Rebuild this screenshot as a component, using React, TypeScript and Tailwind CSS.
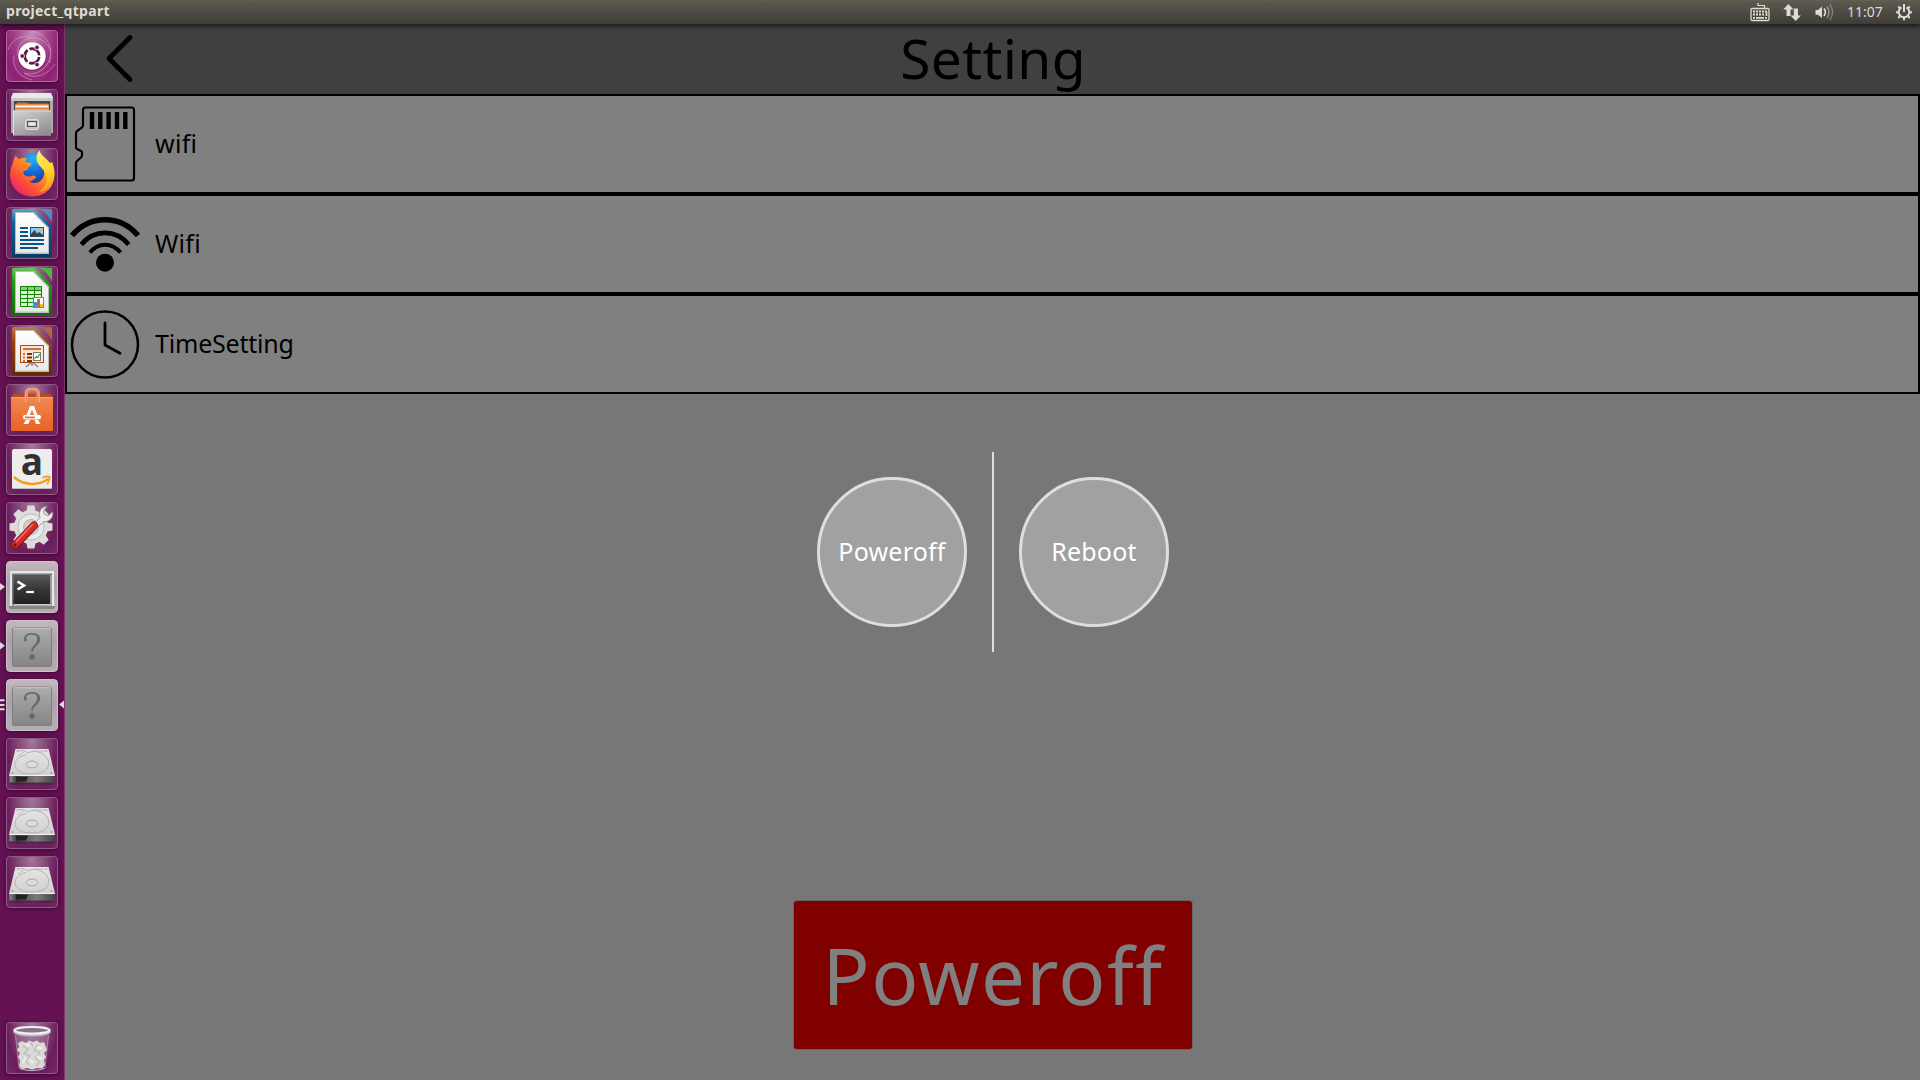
import React from "react";

const FONT = "font-['Noto_Sans',sans-serif]";

type TileProps = {
  children: React.ReactNode;
  kind?: "glass" | "dash" | "light";
  left?: "arrow" | "bars";
  right?: boolean;
};

function Tile({ children, kind = "glass", left, right }: TileProps) {
  const bg =
    kind === "dash"
      ? "border-[#b868a3] bg-[radial-gradient(ellipse_at_50%_0%,#c98fb9_0%,#a5458c_45%,#8d2072_80%,#9a2f80_100%)]"
      : kind === "light"
        ? "border-[#cdc3ca] bg-[linear-gradient(180deg,#c2b9bf_0%,#aca2aa_40%,#b6adb4_100%)]"
        : "border-[#8d5c85] bg-[radial-gradient(ellipse_at_50%_0%,#a27b9b_0%,#854a7a_38%,#6b1c5c_72%,#712a63_100%)]";
  return (
    <div className="relative flex h-[52px] w-full shrink-0 pl-1.5">
      <div className={"h-[52px] w-[52px] rounded-[4px] border shadow-[0_1px_4px_rgba(30,0,25,0.6)] " + bg}>
        <svg className="-m-px block h-[52px] w-[52px] overflow-visible" viewBox="0 0 52 52">
          {children}
        </svg>
      </div>
      {left === "arrow" && (
        <svg className="absolute left-0 top-5 h-3 w-[5px]" viewBox="0 0 5 12">
          <path d="M0 2L5 5.7L0 9.5Z" fill="#ded8dc" />
        </svg>
      )}
      {left === "bars" && (
        <svg className="absolute left-0 top-5 h-3 w-[5px]" viewBox="0 0 5 12">
          <path d="M0 0.3h4l1 1l-1 1H0zM0 5h4l1 1l-1 1H0zM0 9.3h4l1 1l-1 1H0z" fill="#ded8dc" />
        </svg>
      )}
      {right && (
        <svg className="absolute left-[59px] top-5 h-3 w-[5px]" viewBox="0 0 5 12">
          <path d="M5 1.5L0 5.5L5 9.5Z" fill="#ded8dc" />
        </svg>
      )}
    </div>
  );
}

function Gradients() {
  return (
    <svg className="absolute h-0 w-0" aria-hidden="true">
      <defs>
        <linearGradient id="metal" x1="0" y1="0" x2="0.6" y2="1">
          <stop offset="0" stopColor="#d4d4d4" />
          <stop offset="1" stopColor="#919191" />
        </linearGradient>
        <linearGradient id="paper" x1="0" y1="0" x2="0" y2="1">
          <stop offset="0" stopColor="#ffffff" />
          <stop offset="1" stopColor="#e9e9e9" />
        </linearGradient>
        <linearGradient id="blueDoc" x1="0" y1="0" x2="0" y2="1">
          <stop offset="0" stopColor="#5b9fc6" />
          <stop offset="0.3" stopColor="#0d6199" />
          <stop offset="1" stopColor="#063d66" />
        </linearGradient>
        <linearGradient id="greenDoc" x1="0" y1="0" x2="0" y2="1">
          <stop offset="0" stopColor="#6cc35a" />
          <stop offset="0.3" stopColor="#1f9a0c" />
          <stop offset="1" stopColor="#136b06" />
        </linearGradient>
        <linearGradient id="brownDoc" x1="0" y1="0" x2="0" y2="1">
          <stop offset="0" stopColor="#c07a4d" />
          <stop offset="0.3" stopColor="#97430f" />
          <stop offset="1" stopColor="#642a03" />
        </linearGradient>
        <linearGradient id="bag" x1="0" y1="0" x2="0" y2="1">
          <stop offset="0" stopColor="#ef8a50" />
          <stop offset="1" stopColor="#ea6127" />
        </linearGradient>
        <linearGradient id="fox" x1="0.9" y1="0" x2="0.1" y2="0.9">
          <stop offset="0" stopColor="#ffd52e" />
          <stop offset="0.4" stopColor="#ff9321" />
          <stop offset="0.75" stopColor="#fb4a3a" />
          <stop offset="1" stopColor="#e52374" />
        </linearGradient>
        <linearGradient id="foxTail" x1="0" y1="0" x2="0.2" y2="1">
          <stop offset="0" stopColor="#fff36b" />
          <stop offset="0.6" stopColor="#ffd22b" />
          <stop offset="1" stopColor="#ff9a1c" />
        </linearGradient>
        <radialGradient id="globe" cx="0.5" cy="0.15" r="0.9">
          <stop offset="0" stopColor="#25b6f8" />
          <stop offset="0.5" stopColor="#1268d8" />
          <stop offset="1" stopColor="#2b2482" />
        </radialGradient>
        <linearGradient id="screen" x1="0" y1="0" x2="0" y2="1">
          <stop offset="0" stopColor="#5a5a58" />
          <stop offset="0.5" stopColor="#363636" />
          <stop offset="1" stopColor="#222222" />
        </linearGradient>
        <linearGradient id="unknown" x1="0" y1="0" x2="0" y2="1">
          <stop offset="0" stopColor="#acacac" />
          <stop offset="1" stopColor="#858585" />
        </linearGradient>
        <linearGradient id="driveTop" x1="0" y1="0" x2="0" y2="1">
          <stop offset="0" stopColor="#e6e6e6" />
          <stop offset="1" stopColor="#cfcfcf" />
        </linearGradient>
        <linearGradient id="driveFront" x1="0" y1="0" x2="1" y2="0">
          <stop offset="0" stopColor="#8b8b8b" />
          <stop offset="0.15" stopColor="#3e3e3e" />
          <stop offset="0.6" stopColor="#7b7b7b" />
          <stop offset="1" stopColor="#454545" />
        </linearGradient>
      </defs>
    </svg>
  );
}

function DashIcon() {
  return (
    <>
      <g fill="none" stroke="#e0b3d4" strokeWidth="1" opacity="0.55">
        <path d="M12 26C10 12 22 5 34 9C44 13 47 25 43 33" />
        <path d="M26 1C42 5 48 18 43 31C39 41 28 46 18 43" />
        <path d="M2 20C6 9 16 4 27 8" />
        <path d="M8 26C6 38 14 47 26 50" />
        <path d="M18 43C28 50 42 45 49 34" />
      </g>
      <circle cx="26" cy="26.7" r="14.2" fill="#5b0b48" opacity="0.45" />
      <circle cx="26" cy="26" r="13.7" fill="#fff" />
      <circle cx="26" cy="26" r="7.3" fill="none" stroke="#5f174c" strokeWidth="2.7" strokeDasharray="13.3 2" strokeDashoffset="-1" />
      <g fill="#5f174c" stroke="#fff" strokeWidth="0.8">
        <circle cx="16.2" cy="26" r="2.3" />
        <circle cx="31" cy="17.4" r="2.3" />
        <circle cx="31" cy="34.6" r="2.3" />
      </g>
    </>
  );
}

function FilesIcon() {
  return (
    <>
      <path d="M7 4H45L47 9V44H5V9Z" fill="#aaa" />
      <path d="M7 4H45L47 9H5Z" fill="#e9e9e9" />
      <path d="M5 9h42v3H5z" fill="#c8c8c8" />
      <path d="M8 12h36v10H8z" fill="#4a4541" />
      <path d="M11 13.500h10l1 1h20v3H9z" fill="#d9663a" />
      <path d="M9 15.500h34v6h-34z" fill="#f5b06a" />
      <path d="M10 17.500h32" stroke="#fff" strokeWidth="1.2" />
      <path d="M9 19.500h34" stroke="#e9873f" strokeWidth="1.5" />
      <path d="M7 21.500h38V47H7z" fill="url(#metal)" />
      <path d="M7 22h38M7.500 22v25" stroke="#dedede" />
      <path d="M7 46.500h38" stroke="#808080" />
      <rect x="19.500" y="30.500" width="13" height="10" rx="2" fill="#c3c3c3" stroke="#e0e0e0" />
      <rect x="21.600" y="32.600" width="8.800" height="4.800" fill="#eee" stroke="#555" strokeWidth="1.2" />
    </>
  );
}

function FirefoxIcon() {
  return (
    <>
      <circle cx="27" cy="21.5" r="16" fill="url(#globe)" />
      <path
        d="M10 7C10.500 9 11.500 10.500 13 11.300C16 9.200 18.500 9.500 21 10C19.700 11.500 19.500 13 20 14.200L25.300 15C26 17 24 18.500 21.700 19.500L21.500 22.500C19 22 17.500 23 17.200 25C18 28 22 29 25 28.300C27.500 27 29.500 27.500 29.700 29.800C28 31.500 26 33 23.500 33.500C30 37.500 37.500 33 38.200 25.500C38.500 19.500 35 14.500 31.500 12L43 16C50 25 49 35 43 41.500C34 51 17 50.500 9 41C2 33 3.500 21 7 15C7.200 12 8.500 9 10 7Z"
        fill="url(#fox)"
      />
      <path
        d="M33.500 2.300C35 8 40 10 43.500 14.500C44.800 15 46 14.500 46 13.700C49.500 22 49.800 30 45.500 36.500C42.500 41 37 44 32.500 44C40 39 42.500 32 39 24.500C36.500 19 30 17 30.500 9.500C30.800 6.500 32 4 33.500 2.300Z"
        fill="url(#foxTail)"
      />
    </>
  );
}

function DocBase({ fill, ear }: { fill: string; ear: string }) {
  return (
    <>
      <path d="M8 2H29L46 20V48Q46 50 44 50H8Q6 50 6 48V4Q6 2 8 2Z" fill={fill} />
      <path d="M33 2H45Q46 2 46 3V15.500C43 9.500 39 4.500 33 2Z" fill={ear} />
      <path d="M9 5H28L43 20.500V47H9Z" fill="#bcbcbc" />
      <path d="M10 6H27L42 21.500V45.500H10Z" fill="url(#paper)" />
    </>
  );
}

function WriterIcon() {
  return (
    <>
      <DocBase fill="url(#blueDoc)" ear="#4a8fbd" />
      <path d="M14 21h8M14 25h8M14 29h8M14 33h24M14 37h24M14 41h18" stroke="#0b5487" strokeWidth="2" />
      <rect x="24.500" y="20.500" width="13" height="9" fill="#8cc7f0" stroke="#0b5487" />
      <path d="M25 29.500V27L28.500 23L31 26.500L33 25L37 28V29.500Z" fill="#3b4348" />
      <path d="M34 21h3v3z" fill="#f8c62d" />
    </>
  );
}

function CalcIcon() {
  return (
    <>
      <DocBase fill="url(#greenDoc)" ear="#4fb83c" />
      <path d="M14.500 20.500h21v20h-21z" fill="#d9f5d2" />
      <path d="M14.500 20.500h21v4h-21z" fill="#7fd26f" />
      <path d="M14.500 20.500h21v20h-21zM14.500 24.500h21M14.500 28.500h21M14.500 32.500h21M14.500 36.500h21M21.500 20.500v20M28.500 20.500v20" fill="none" stroke="#148407" />
      <rect x="27.500" y="31.500" width="10" height="10" fill="#fff" stroke="#808080" />
      <path d="M28 36h3v5h-3z" fill="#2d9be8" />
      <path d="M31 33h3v8h-3z" fill="#dd6321" />
      <path d="M34 38h3v3h-3z" fill="#f0bb26" />
    </>
  );
}

function ImpressIcon() {
  return (
    <>
      <DocBase fill="url(#brownDoc)" ear="#b1683a" />
      <path d="M24.500 38L20 42M27.500 38L32 42M26 38v3" stroke="#888" strokeWidth="1.6" />
      <rect x="14.500" y="20.500" width="23" height="17" fill="#fbe6da" stroke="#ad4a15" />
      <path d="M17 24h18" stroke="#db6a2d" strokeWidth="2" />
      <path d="M17 29h2M17 32.500h2M17 36h2" stroke="#db6a2d" strokeWidth="1.800" />
      <path d="M21 29h5M21 32.500h5M21 36h5" stroke="#7d3105" strokeWidth="1.800" />
      <rect x="27.500" y="27.500" width="7" height="8" fill="#fff" stroke="#777" />
      <path d="M28.500 33.500L30.500 31.500L31.500 32.500L34 29" fill="none" stroke="#2ea023" strokeWidth="1.200" />
    </>
  );
}

function SoftwareIcon() {
  return (
    <>
      <path d="M7 10L9 13M45 10L43 13M7 10H45L47 13.500H5Z" fill="#b64d22" />
      <path d="M5 13H47V47H5Z" fill="url(#bag)" />
      <path d="M5 13.500H47" stroke="#f5a478" />
      <path d="M20.500 18V9.500Q20.500 5.500 24 5.500H28.500Q32 5.500 32 9.500V18" fill="none" stroke="#ef8e62" strokeWidth="3" />
      <path d="M19.200 18V9Q19.200 4.500 24 4.500H28.500Q33.300 4.500 33.300 9V18" fill="none" stroke="#f7b795" strokeWidth="0.700" />
      <path d="M24 22H28L31.500 31H28L26 25.500L24 31H20.500ZM20 36H24L22.300 40H17.500ZM28.500 36H32L34.500 40H30Z" fill="#fff" />
      <rect x="17" y="31" width="18" height="4.600" rx="2" fill="#fff" />
      <path d="M19 33.400h10" stroke="#ea6a31" strokeWidth="1.700" />
    </>
  );
}

function AmazonIcon() {
  return (
    <>
      <rect x="6" y="6" width="40" height="40" rx="2" fill="#ededed" />
      <path d="M6.500 45.500h39" stroke="#bdbdbd" />
      <text x="26" y="32" textAnchor="middle" fontSize="37" fontWeight="700" fill="#303030" className="font-['Open_Sans',sans-serif]">
        a
      </text>
      <path d="M8.500 34.500C18 42.500 31 43 41.500 36.500" fill="none" stroke="#f79a16" strokeWidth="2.300" strokeLinecap="round" />
      <path d="M37 34.500C40 33.300 42.500 33.300 43.500 34C43.800 36 43 38.500 41.500 40.500" fill="none" stroke="#f79a16" strokeWidth="1.800" strokeLinecap="round" />
    </>
  );
}

const GEAR_TEETH = [0, 45, 90, 135, 180, 225, 270, 315];

function SettingsIcon() {
  return (
    <>
      <g fill="#dcdcdc">
        {GEAR_TEETH.map((a) => (
          <path key={a} d="M21.500 3.500H28.500L30 12H20Z" transform={`rotate(${a} 25 25)`} />
        ))}
        <circle cx="25" cy="25" r="17" />
      </g>
      <circle cx="25" cy="25" r="13" fill="#e9e9e9" stroke="#bcbcbc" />
      <circle cx="25" cy="25" r="7.500" fill="#cfcfcf" stroke="#b0b0b0" />
      <path
        d="M27.500 22.500L34 15.500C32 10 35 4.500 41 4.500L37.500 8.500L38.500 12.500L42.500 13.500L46.500 9.800C48 15.500 43 20.500 37.500 19.500L31 26Z"
        fill="#ececec"
        stroke="#929292"
        strokeWidth="0.900"
      />
      <path d="M9.500 43L28 23.500" stroke="#8c1412" strokeWidth="8" strokeLinecap="round" />
      <path d="M9.500 42.600L28 23.200" stroke="#cf2b28" strokeWidth="6.500" strokeLinecap="round" />
      <path d="M10.500 39.500L26.500 22.500" stroke="#ee7672" strokeWidth="1.300" strokeLinecap="round" />
      <circle cx="9" cy="43" r="1.500" fill="#6f1010" />
    </>
  );
}

function TerminalIcon() {
  return (
    <>
      <path d="M4 10H48L49 46Q49 48 47 48H5Q3 48 3 46Z" fill="#858585" />
      <path d="M4 10H48L48.600 45H3.400Z" fill="#e6e6e6" />
      <path d="M6 12.500H46V44.500H6Z" fill="#777" />
      <path d="M7.500 14H44.500V43H7.500Z" fill="url(#screen)" />
      <path d="M8 43.500H45V14" fill="none" stroke="#ccc" />
      <path d="M11.500 20.500L18 24.500L11.500 28.500" fill="none" stroke="#fff" strokeWidth="2.600" />
      <path d="M20.200 31h7.800" stroke="#fff" strokeWidth="2.200" />
    </>
  );
}

function UnknownIcon() {
  return (
    <>
      <rect x="6.500" y="9" width="39" height="38" rx="1.500" fill="#777" opacity="0.700" />
      <rect x="6.500" y="8" width="39" height="38" rx="1.500" fill="url(#unknown)" stroke="#7e7e7e" />
      <path d="M7.500 8.700H44.500" stroke="#c8c8c8" />
      <path
        d="M18.700 20.500C18.500 15.500 22 13.800 26 13.800C30.500 13.800 33.200 16 33.200 19.500C33.200 25.500 26 25 26 31.500"
        fill="none"
        stroke="#686868"
        strokeWidth="1.800"
      />
      <path d="M29.500 14.600C34.800 17 34.500 22 30.500 25L27 29C27 25 31 24 31 19.500C31 17 30.500 15.500 29.500 14.600Z" fill="#686868" />
      <circle cx="19.300" cy="20" r="1.600" fill="#686868" />
      <circle cx="26" cy="37" r="2.700" fill="#686868" />
    </>
  );
}

function DriveIcon() {
  return (
    <>
      <path d="M3.500 37H48.500V45Q48.500 46.500 47 46.500H5Q3.500 46.500 3.500 45Z" fill="#222" opacity="0.400" />
      <path d="M3.500 37H48.500V44.500H3.500Z" fill="url(#driveFront)" />
      <path d="M10 38.800H22L20 43.500H10Z" fill="#222" />
      <path d="M9.500 11H42.500L48.700 36V38H3.300V36Z" fill="url(#driveTop)" />
      <path d="M3.500 37.500H48.500" stroke="#f4f4f4" />
      <path d="M12 13C16 12 20 13 22 15C29 11 40 15 42.500 23C44 33 35 36 26 36C15 36 7 32 9.500 24C11 20 15 18 20 16.500" fill="none" stroke="#b2b2b2" strokeWidth="1" />
      <ellipse cx="26" cy="26.500" rx="5.700" ry="3.400" fill="#dcdcdc" stroke="#a9a9a9" />
      <path d="M27 13H40M12 18L18 14" stroke="#bbb" />
      <g fill="#999">
        <circle cx="11.500" cy="13" r="0.800" />
        <circle cx="40.500" cy="13" r="0.800" />
        <circle cx="6.500" cy="35" r="0.900" />
        <circle cx="45.500" cy="35" r="0.900" />
      </g>
    </>
  );
}

function TrashIcon() {
  return (
    <>
      <path d="M9 12L13 46Q26 50 39 46L43 12Z" fill="#c9a8c4" opacity="0.250" />
      <path d="M9.500 13L13 46M42.500 13L39 46" stroke="#d3bfd0" opacity="0.500" />
      <path
        d="M12 21L16 19L20 21L23 18.500L27 20L31 18.500L34 21L38 20L39.500 24L41 28L38 31L40 35L38 38L39 43L36 46.500L31 46L26 47.500L21 46L16 47L13 44L14 39L12 35L14 31L11 28L13 25Z"
        fill="#d9d9d6"
      />
      <path d="M17 24L22 27L18 31L24 34L19 38L23 43M32 22L28 28L34 31L29 36L34 40L30 44M25 21L27 25" fill="none" stroke="#bbbbb8" strokeWidth="1.100" />
      <path d="M19 22L24 24M31 26L36 26M20 35L17 41M31 34L36 37M24 38L28 41" stroke="#f0f0ee" strokeWidth="2" />
      <path d="M13.500 46.500Q26 50.500 38.500 46.500" fill="none" stroke="#cfc0cc" strokeWidth="1" />
      <path d="M7.500 7.500V11Q12 14.500 26 14.500T44.500 11V7.500Z" fill="#b9b9b9" />
      <ellipse cx="26" cy="8.300" rx="17.500" ry="3.300" fill="#8b6f86" stroke="#f1f1f1" strokeWidth="2.200" />
    </>
  );
}

function TopBar() {
  return (
    <header className="relative z-20 flex h-6 shrink-0 items-center justify-between bg-[linear-gradient(180deg,#66624f_0px,#5b584d_2px,#4e4c44_12px,#3e3d38_24px)] shadow-[0_1px_5px_1px_rgba(0,0,0,0.65)]">
      <span className={FONT + " -mt-0.5 pl-1.5 text-[14px] font-bold leading-6 tracking-[0.300px] text-[#dfdbd2]"}>project_qtpart</span>
      <div className="flex h-6 items-center">
        <svg className="h-6 w-5" viewBox="0 0 20 24" fill="none" stroke="#dfdbd2">
          <path d="M8 3V5.500H14.500V8" strokeWidth="1.200" />
          <rect x="1" y="8.500" width="18" height="12" rx="1" strokeWidth="1.300" />
          <path d="M3 11.500h14M3 14.500h12" strokeWidth="1.900" strokeDasharray="2 1" />
          <path d="M3 17.800h2M6 17.800h8M15 17.800h2M16.500 12v4" strokeWidth="1.700" />
        </svg>
        <svg className="ml-[13px] h-6 w-[18px]" viewBox="0 0 18 24" fill="#dfdbd2">
          <path d="M5.300 4L10.500 9.500H7.500V16H3.500V9.500H0.300Z" />
          <path d="M12.700 21L18 15.500H15V8.500H10.800V15.500H7.500Z" />
        </svg>
        <svg className="ml-[14px] h-6 w-5" viewBox="0 0 20 24" fill="none" stroke="#dfdbd2" strokeWidth="1.500">
          <path d="M0.500 10H3L7 6.500V18L3 14.800H0.500Z" fill="#dfdbd2" stroke="none" />
          <path d="M9 8.500Q11.800 12.300 9 16" strokeWidth="1.700" />
          <path d="M12 6.500Q16 12.300 12 18.200" opacity="0.500" />
          <path d="M14.800 4.500Q20.500 12.300 14.800 20.300" opacity="0.350" />
        </svg>
        <span className={FONT + " ml-[12px] -mt-px w-[49px] text-[14px] leading-6 text-[#dfdbd2]"}>11:07</span>
        <svg className="mr-2 h-6 w-4" viewBox="0 0 16 24" fill="none" stroke="#dfdbd2">
          <path d="M5.500 7.300A5.300 5.300 0 1 0 10.500 7.300" strokeWidth="2" />
          <path d="M8 4V12" strokeWidth="2" />
          <path d="M0 12.200H2.500M13.500 12.200H16M8 18V20.300M2.300 6.500L4 8.200M13.700 6.500L12 8.200M2.300 18L4 16.300M13.700 18L12 16.300" strokeWidth="2" />
        </svg>
      </div>
    </header>
  );
}

function Launcher() {
  return (
    <aside className="flex w-[65px] shrink-0 flex-col justify-between border-r border-[#7f3573] bg-[#651153] pb-1.5 pt-1.5">
      <div className="flex flex-col gap-[7px]">
        <Tile kind="dash"><DashIcon /></Tile>
        <Tile><FilesIcon /></Tile>
        <Tile><FirefoxIcon /></Tile>
        <Tile><WriterIcon /></Tile>
        <Tile><CalcIcon /></Tile>
        <Tile><ImpressIcon /></Tile>
        <Tile><SoftwareIcon /></Tile>
        <Tile><AmazonIcon /></Tile>
        <Tile><SettingsIcon /></Tile>
        <Tile kind="light" left="arrow"><TerminalIcon /></Tile>
        <Tile kind="light" left="arrow"><UnknownIcon /></Tile>
        <Tile kind="light" left="bars" right><UnknownIcon /></Tile>
        <Tile><DriveIcon /></Tile>
        <Tile><DriveIcon /></Tile>
        <Tile><DriveIcon /></Tile>
      </div>
      <Tile><TrashIcon /></Tile>
    </aside>
  );
}

function SdCardIcon() {
  return (
    <svg className="h-24 w-[88px] shrink-0" viewBox="67 96 88 96">
      <path
        d="M85.500 107.500H131.500Q134 107.500 134 110V178Q134 180.500 131.500 180.500H78.500Q76 180.500 76 178V163.500Q76 162 77 161L81 157.500Q82 156.500 82 155V152.500Q82 151.500 81 151L77 149Q76 148.500 76 147V133.500Q76 132 77 131L82 127.500Q83 126.500 83 125V110Q83 107.500 85.500 107.500Z"
        fill="none"
        stroke="#000"
        strokeWidth="2.200"
      />
      <path d="M92 112V129M100.300 112V129M108.600 112V129M117 112V129M125.300 112V129" stroke="#000" strokeWidth="4.400" />
    </svg>
  );
}

function WifiIcon() {
  return (
    <svg className="h-24 w-[88px] shrink-0" viewBox="67 196 88 96" fill="none" stroke="#000">
      <path d="M72 235.500C90 214.500 120 214.500 138 235.500" strokeWidth="5.600" />
      <path d="M81.300 244.500C94 229 116 229 128.700 244.500" strokeWidth="4.600" />
      <path d="M90 252.500C98 242 112 242 120.500 252.500" strokeWidth="4" />
      <circle cx="105" cy="262.700" r="9" fill="#000" stroke="none" />
    </svg>
  );
}

function ClockIcon() {
  return (
    <svg className="h-24 w-[88px] shrink-0" viewBox="67 296 88 96" fill="none" stroke="#000">
      <circle cx="105" cy="344.500" r="33" strokeWidth="2.500" />
      <path d="M105 323V345L120 353.300" strokeWidth="2.800" strokeLinecap="round" strokeLinejoin="round" />
    </svg>
  );
}

function Row({ icon, label, track }: { icon: React.ReactNode; label: string; track: string }) {
  return (
    <div className="flex h-[100px] shrink-0 items-center border-2 border-black bg-[#808080]">
      {icon}
      <span className={FONT + " pb-0.5 text-[25px] leading-[34px] text-black " + track}>{label}</span>
    </div>
  );
}

function RoundButton({ label }: { label: string }) {
  return (
    <button className="flex h-[150px] w-[150px] items-center justify-center rounded-full border-[3px] border-[#dedede] bg-[#a1a1a1]">
      <span className={FONT + " pb-0.5 text-[25px] leading-[34px] tracking-[0.200px] text-white"}>{label}</span>
    </button>
  );
}

export default function App() {
  return (
    <div className="flex h-[1080px] w-[1920px] flex-col overflow-hidden bg-[#777777]">
      <Gradients />
      <TopBar />
      <div className="flex min-h-0 flex-1">
        <Launcher />
        <main className="flex min-w-0 flex-1 flex-col">
          <div className="grid h-[70px] shrink-0 grid-cols-[110px_1fr_110px] items-start bg-[#404040]">
            <svg className="h-[70px] w-[110px]" viewBox="65 24 110 70">
              <path d="M130 37.500L109 58.500L130 79.500" fill="none" stroke="#000" strokeWidth="4.800" strokeLinecap="round" strokeLinejoin="round" />
            </svg>
            <h1 className={FONT + " pl-px text-center text-[55px] leading-[68px] tracking-[0.400px] text-black"}>Setting</h1>
          </div>
          <Row icon={<SdCardIcon />} label="wifi" track="tracking-[0.300px]" />
          <Row icon={<WifiIcon />} label="Wifi" track="tracking-[0.300px]" />
          <Row icon={<ClockIcon />} label="TimeSetting" track="tracking-[-0.200px]" />
          <div className="flex flex-1 flex-col items-center justify-between pb-[31px] pl-px pt-[58px]">
            <div className="flex items-center gap-[25px]">
              <RoundButton label="Poweroff" />
              <div className="h-[200px] w-0.5 bg-[#dddddd]" />
              <RoundButton label="Reboot" />
            </div>
            <button className="flex h-[148px] w-[398px] items-center justify-center rounded-[3px] bg-[#800000] shadow-[0_0_0_1px_#666666]">
              <span className={FONT + " text-[78px] leading-[106px] tracking-[1.400px] text-[#808080]"}>Poweroff</span>
            </button>
          </div>
        </main>
      </div>
    </div>
  );
}
